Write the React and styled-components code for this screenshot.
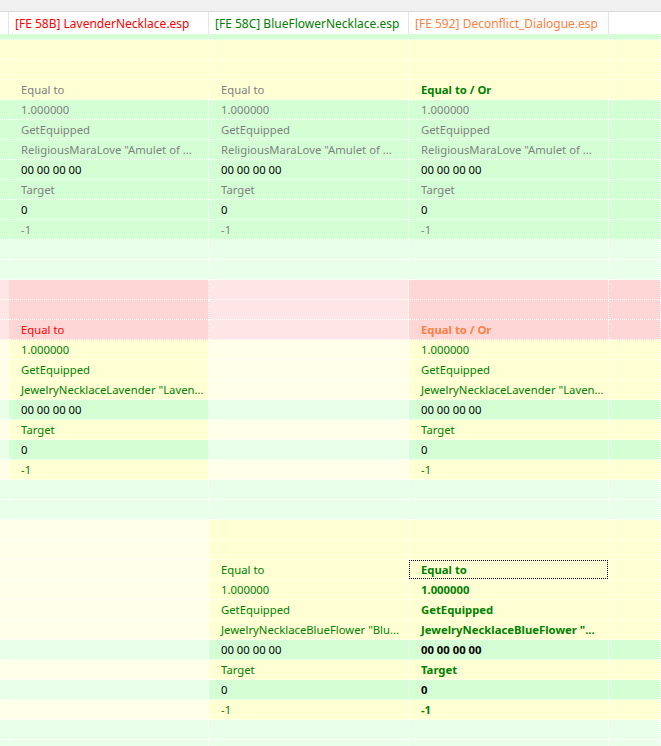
import React from 'react';
import styled, { createGlobalStyle, css } from 'styled-components';

const GlobalStyle = createGlobalStyle`
    html, body {
        margin: 0;
        padding: 0;
        background: #ffffff;
    }
    body {
        font-family: "Noto Sans", "Open Sans", sans-serif;
        font-size: 12px;
    }
`

// background colours used by the compare grid
const BG = {
    G: '#d4ffd4',
    g: '#eaffea',
    Y: '#ffffd4',
    y: '#ffffea',
    R: '#ffd6d6',
    r: '#ffe6e6',
}

const INK = {
    gray: '#808080',
    black: '#000000',
    green: '#008000',
    red: '#ff0000',
    orange: '#ff8040',
}

const COLS = '9px 200px 200px 200px 1fr';

const Window = styled.div`
    width: 661px;
    height: 746px;
    overflow: hidden;
    display: flex;
    flex-direction: column;
    background: #ffffff;
`

const TopStrip = styled.div`
    height: 11px;
    flex: none;
    background: #f0f0f0;
    border-bottom: 1px solid #dadada;
`

const HeaderRow = styled.div`
    display: grid;
    grid-template-columns: ${COLS};
    height: 22px;
    flex: none;
    background: #ffffff;
    position: relative;
    z-index: 1;
`

const HeaderCell = styled.div`
    display: flex;
    align-items: center;
    padding-left: 6px;
    border-right: 1px solid #e5e5e5;
    color: ${p => p.$color || '#000'};
    white-space: nowrap;
    overflow: hidden;
    box-sizing: border-box;

    &:last-child {
        border-right: none;
    }
`

const Viewport = styled.div`
    flex: 1;
    overflow: hidden;
`

const Rows = styled.div`
    margin-top: -14px;
`

const Row = styled.div`
    display: grid;
    grid-template-columns: ${COLS};
    height: 20px;
`

const Cell = styled.div`
    position: relative;
    box-sizing: border-box;
    height: 20px;
    padding-left: 12px;
    display: flex;
    align-items: center;
    white-space: nowrap;
    overflow: hidden;
    font-size: 11.3px;
    background: ${p => p.$bg};
    color: ${p => p.$ink};
    font-weight: ${p => (p.$bold ? 700 : 400)};
    border-right: 1px dotted #ffffff;
    border-bottom: 1px dotted #ffffff;

    ${p => p.$focus && css`
        overflow: visible;
        &::after {
            content: '';
            position: absolute;
            left: 0;
            top: 0;
            right: 0;
            bottom: 0;
            border: 1px dotted #000000;
        }
    `}
`

// partial row at the top: only the descenders peek out below the header
const Peek = styled.span`
    position: relative;
    top: -4px;
`

// row helpers: bg is five letters (left strip, 3 files, filler); cells are [text, ink, bold]
const same = (c) => c + c + c + c + c;

const rows = [
    { bg: same('G'), peek: true, cells: [['Player by ... gyy', 'gray'], ['Player by ... gyy', 'gray'], ['Run On ... gy ... y', 'gray']] },
    { bg: same('Y') },
    { bg: same('Y') },
    { bg: same('Y'), cells: [['Equal to', 'gray'], ['Equal to', 'gray'], ['Equal to / Or', 'green', true]] },
    { bg: same('G'), cells: [['1.000000', 'gray'], ['1.000000', 'gray'], ['1.000000', 'gray']] },
    { bg: same('G'), cells: [['GetEquipped', 'gray'], ['GetEquipped', 'gray'], ['GetEquipped', 'gray']] },
    { bg: same('G'), cells: [['ReligiousMaraLove "Amulet of ...', 'gray'], ['ReligiousMaraLove "Amulet of ...', 'gray'], ['ReligiousMaraLove "Amulet of ...', 'gray']] },
    { bg: same('G'), cells: [['00 00 00 00', 'black'], ['00 00 00 00', 'black'], ['00 00 00 00', 'black']] },
    { bg: same('G'), cells: [['Target', 'gray'], ['Target', 'gray'], ['Target', 'gray']] },
    { bg: same('G'), cells: [['0', 'black'], ['0', 'black'], ['0', 'black']] },
    { bg: same('G'), cells: [['-1', 'gray'], ['-1', 'gray'], ['-1', 'gray']] },
    { bg: same('g') },
    { bg: same('g') },

    { bg: 'rRrRR' },
    { bg: 'rRrRR' },
    { bg: 'rRrRR', cells: [['Equal to', 'red'], null, ['Equal to / Or', 'orange', true]] },
    { bg: 'yYyYY', cells: [['1.000000', 'green'], null, ['1.000000', 'green']] },
    { bg: 'yYyYY', cells: [['GetEquipped', 'green'], null, ['GetEquipped', 'green']] },
    { bg: 'yYyYY', cells: [['JewelryNecklaceLavender "Laven...', 'green'], null, ['JewelryNecklaceLavender "Laven...', 'green']] },
    { bg: 'gGgGG', cells: [['00 00 00 00', 'black'], null, ['00 00 00 00', 'black']] },
    { bg: 'yYyYY', cells: [['Target', 'green'], null, ['Target', 'green']] },
    { bg: 'gGgGG', cells: [['0', 'black'], null, ['0', 'black']] },
    { bg: 'yYyYY', cells: [['-1', 'green'], null, ['-1', 'green']] },
    { bg: same('g') },
    { bg: same('g') },

    { bg: 'yyYYY' },
    { bg: 'yyYYY' },
    { bg: 'yyYYY', focus: true, cells: [null, ['Equal to', 'green'], ['Equal to', 'green', true]] },
    { bg: 'yyYYY', cells: [null, ['1.000000', 'green'], ['1.000000', 'green', true]] },
    { bg: 'yyYYY', cells: [null, ['GetEquipped', 'green'], ['GetEquipped', 'green', true]] },
    { bg: 'yyYYY', cells: [null, ['JewelryNecklaceBlueFlower "Blu...', 'green'], ['JewelryNecklaceBlueFlower "...', 'green', true]] },
    { bg: 'ggGGG', cells: [null, ['00 00 00 00', 'black'], ['00 00 00 00', 'black', true]] },
    { bg: 'yyYYY', cells: [null, ['Target', 'green'], ['Target', 'green', true]] },
    { bg: 'ggGGG', cells: [null, ['0', 'black'], ['0', 'black', true]] },
    { bg: 'yyYYY', cells: [null, ['-1', 'green'], ['-1', 'green', true]] },
    { bg: same('g') },
    { bg: same('g') },
]

const headers = [
    { text: '[FE 58B] LavenderNecklace.esp', color: INK.red },
    { text: '[FE 58C] BlueFlowerNecklace.esp', color: INK.green },
    { text: '[FE 592] Deconflict_Dialogue.esp', color: INK.orange },
]

function GridRow({ row }) {
    const bg = row.bg.split('').map(k => BG[k]);
    const cells = row.cells || [null, null, null];
    return (
        <Row>
            <Cell $bg={bg[0]} />
            {cells.map((c, i) => (
                <Cell
                    key={i}
                    $bg={bg[i + 1]}
                    $ink={c ? INK[c[1]] : '#000'}
                    $bold={c && c[2]}
                    $focus={row.focus && i === 2}
                >
                    {c ? (row.peek ? <Peek>{c[0]}</Peek> : c[0]) : ''}
                </Cell>
            ))}
            <Cell $bg={bg[4]} />
        </Row>
    )
}

export default function App() {
    return (
        <>
            <GlobalStyle />
            <Window>
                <TopStrip />
                <HeaderRow>
                    <HeaderCell />
                    {headers.map(h => (
                        <HeaderCell key={h.text} $color={h.color}>{h.text}</HeaderCell>
                    ))}
                    <HeaderCell />
                </HeaderRow>
                <Viewport>
                    <Rows>
                        {rows.map((r, i) => <GridRow key={i} row={r} />)}
                    </Rows>
                </Viewport>
            </Window>
        </>
    )
}
